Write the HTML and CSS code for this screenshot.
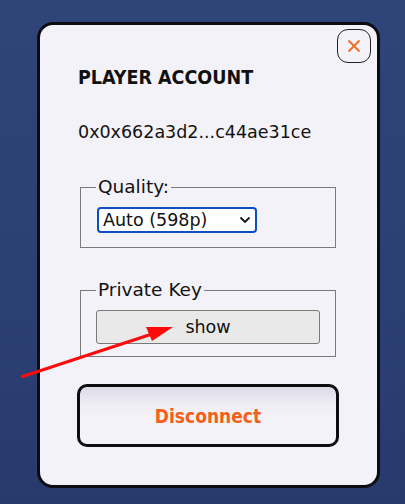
FILE: index.html
```html
<!DOCTYPE html>
<html>
<head>
<meta charset="utf-8">
<link rel="stylesheet" href="styles.css">
</head>
<body>
<div class="modal">
  <button class="close" aria-label="close">
    <svg width="14" height="14" viewBox="0 0 14 14"><path d="M1.5 1.5 L12.5 12.5 M12.5 1.5 L1.5 12.5" stroke="#f26a1b" stroke-width="1.8" fill="none"/></svg>
  </button>
  <h1 class="title">PLAYER ACCOUNT</h1>
  <p class="address">0x0x662a3d2...c44ae31ce</p>
  <fieldset class="group quality">
    <legend>Quality:</legend>
    <div class="select">
      <span>Auto (598p)</span>
      <svg width="12" height="8" viewBox="0 0 12 8"><path d="M1.5 1.5 L6 6 L10.5 1.5" stroke="#111" stroke-width="1.8" fill="none"/></svg>
    </div>
  </fieldset>
  <fieldset class="group key">
    <legend>Private Key</legend>
    <button class="show">show</button>
  </fieldset>
  <button class="disconnect">Disconnect</button>
</div>
<svg class="arrow" width="200" height="80" viewBox="0 320 200 80">
  <line x1="21" y1="377" x2="152" y2="334" stroke="#ff0a0a" stroke-width="3"/>
  <polygon points="173,327 146,327 152,341" fill="#ff0a0a"/>
</svg>
</body>
</html>
```
FILE: styles.css
```css
html, body {
  margin: 0;
  padding: 0;
}
body {
  width: 405px;
  height: 504px;
  overflow: hidden;
  background: linear-gradient(180deg, #2f4479 0%, #2c3f74 60%, #283a6c 100%);
  font-family: "DejaVu Sans", sans-serif;
  position: relative;
}
.modal {
  position: relative;
  box-sizing: border-box;
  width: 343px;
  height: 466px;
  margin: 22px 0 0 37px;
  border: 3px solid #0d0c10;
  border-radius: 16px;
  background: #f4f2f9;
  padding: 41px 38px 0 38px;
  display: flex;
  flex-direction: column;
}
.close {
  position: absolute;
  top: 4px;
  right: 6px;
  width: 34px;
  height: 34px;
  border: 1px solid #222;
  border-radius: 11px;
  background: transparent;
  display: flex;
  align-items: center;
  justify-content: center;
  padding: 0;
}
.title {
  margin: 0;
  font-family: "DejaVu Sans Condensed", "DejaVu Sans", sans-serif;
  font-stretch: condensed;
  font-size: 19.5px;
  line-height: 24px;
  font-weight: bold;
  color: #111;
}
.address {
  margin: 31px 0 0 0;
  font-size: 17.5px;
  line-height: 22px;
  color: #111;
}
.group {
  margin: 33px 3px 0 2px;
  border: 1px solid #7a7a7a;
  padding: 9px 15px 14px 15px;
  min-width: 0;
}
.group legend {
  padding: 0 2px;
  font-size: 18.5px;
  line-height: 22px;
  color: #111;
}
.select {
  box-sizing: border-box;
  width: 160px;
  height: 26px;
  margin-left: 1px;
  border: 2px solid #0b4fc1;
  border-radius: 4px;
  background: #fff;
  display: flex;
  align-items: center;
  justify-content: space-between;
  padding: 0 4px 0 4px;
  font-size: 17.5px;
  color: #111;
}
.key {
  margin-top: 31px;
  padding-bottom: 12px;
}
.show {
  display: block;
  width: 100%;
  height: 34px;
  border: 1px solid #7a7a7a;
  border-radius: 3px;
  background: #e9e9e9;
  font-family: "DejaVu Sans", sans-serif;
  font-size: 17.5px;
  color: #111;
  padding: 0;
}
.disconnect {
  margin: 27px 0 0 -1px;
  height: 63px;
  border: 3px solid #0d0c10;
  border-radius: 10px;
  background: linear-gradient(180deg, #dddae6 0%, #eeecf4 30%, #f4f2f9 50%);
  font-family: "DejaVu Sans Condensed", "DejaVu Sans", sans-serif;
  font-stretch: condensed;
  font-weight: bold;
  font-size: 19px;
  color: #f2601a;
}
.arrow {
  position: absolute;
  left: 0;
  top: 320px;
}
```
